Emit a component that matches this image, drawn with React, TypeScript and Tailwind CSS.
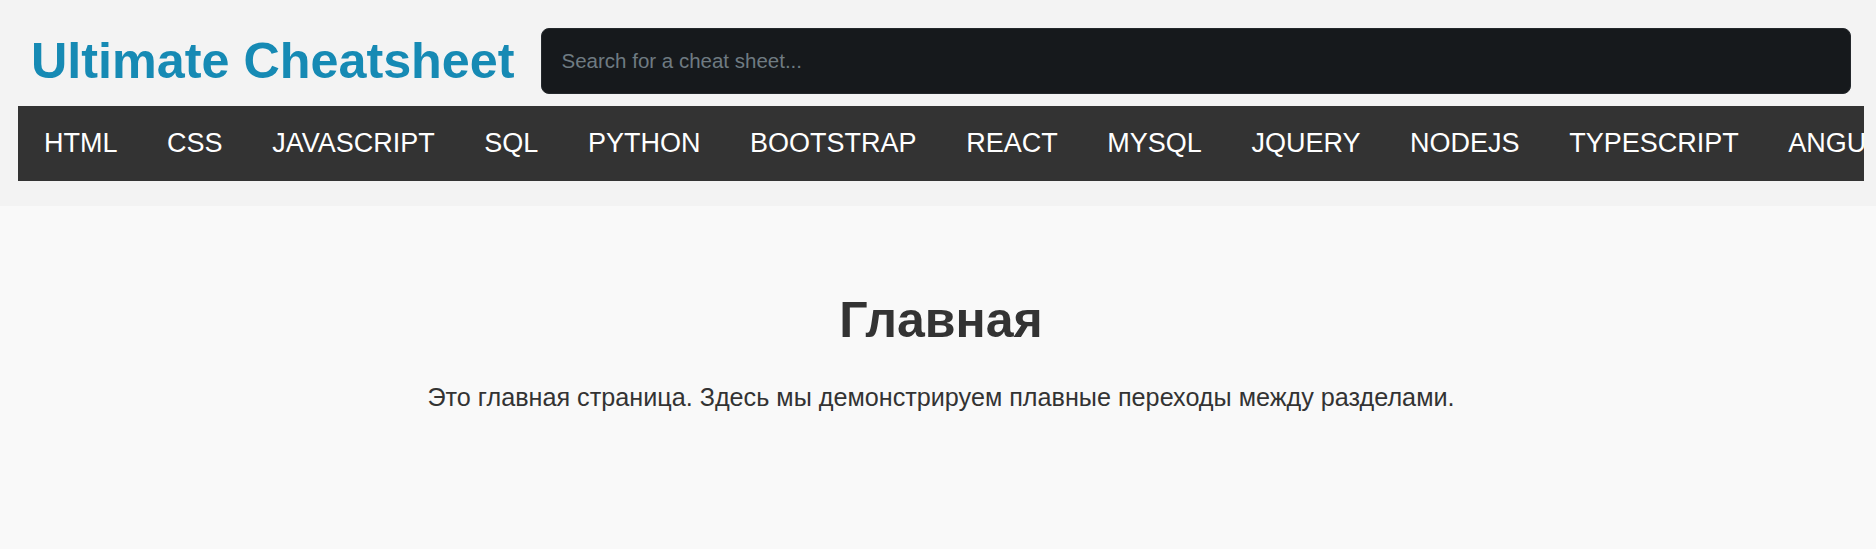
const topics = [
  'HTML',
  'CSS',
  'JAVASCRIPT',
  'SQL',
  'PYTHON',
  'BOOTSTRAP',
  'REACT',
  'MYSQL',
  'JQUERY',
  'NODEJS',
  'TYPESCRIPT',
  'ANGULAR',
  'VUE',
  'PHP',
];

export default function App() {
  return (
    <div className="min-h-screen bg-[#f9f9f9] font-['Liberation_Sans',Arial,sans-serif]">
      <header className="bg-[#f3f3f3] pt-[28px] pb-[25px]">
        <div className="flex items-center pl-[31px] pr-[25px]">
          <h1 className="shrink-0 text-[50.3px] leading-[1.15] font-bold text-[#168ab4] whitespace-nowrap">
            Ultimate Cheatsheet
          </h1>
          <input
            type="text"
            placeholder="Search for a cheat sheet..."
            className="ml-[26px] h-[66px] flex-1 rounded-lg border border-[#24282c] bg-[#16191c] pl-[20px] text-[20.5px] text-white outline-none placeholder:text-[#6f7b82]"
          />
        </div>
        {/* topic bar, runs off the right edge */}
        <nav className="mt-[12px] ml-[18px] mr-[12px] h-[75px] overflow-hidden bg-[#333333]">
          <ul className="flex h-full items-center gap-[49.6px] pl-[26px] whitespace-nowrap">
            {topics.map((t) => (
              <li key={t} className="shrink-0">
                <a href="#" className="text-[27px] leading-[1.15] text-white">
                  {t}
                </a>
              </li>
            ))}
          </ul>
        </nav>
      </header>

      <main className="pt-[86px] pl-[6px] text-center text-[#333333]">
        <h2 className="text-[50px] leading-[1.15] font-bold">Главная</h2>
        <p className="mt-[33px] text-[25.2px] leading-[1.15]">
          Это главная страница. Здесь мы демонстрируем плавные переходы между разделами.
        </p>
      </main>
    </div>
  );
}
